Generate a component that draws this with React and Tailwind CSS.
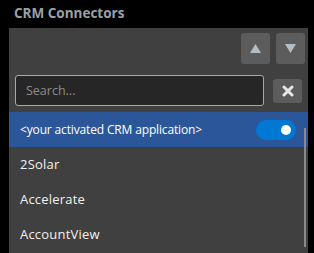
import React, { useState } from 'react';

const connectors = ['2Solar', 'Accelerate', 'AccountView'];

const App = () => {
  const [query, setQuery] = useState('');
  const [enabled, setEnabled] = useState(true);

  return (
    <div className="w-[314px] h-[253px] bg-black overflow-hidden font-['Open_Sans',sans-serif]">
      {/* Title */}
      <div className="h-[28px] pl-[14px] pt-[3px] text-[13.5px] font-bold leading-[20px] text-[#9aa0a8]">
        CRM Connectors
      </div>

      {/* Panel */}
      <div className="ml-[9px] w-[299px] h-[225px] bg-[#404040]">
        {/* Move buttons */}
        <div className="flex justify-end gap-[6px] pt-[5px] pr-[3px]">
          <button className="w-[29px] h-[31px] rounded-[3px] bg-[#5c5c5c] flex items-center justify-center">
            <svg width="11" height="9" viewBox="0 0 11 9">
              <polygon points="5.5,0 11,9 0,9" fill="#b4bcc4" />
            </svg>
          </button>
          <button className="w-[29px] h-[31px] rounded-[3px] bg-[#5c5c5c] flex items-center justify-center">
            <svg width="11" height="9" viewBox="0 0 11 9">
              <polygon points="0,0 11,0 5.5,9" fill="#b4bcc4" />
            </svg>
          </button>
        </div>

        {/* Search */}
        <div className="flex items-center gap-[9px] pl-[6px] mt-[11px]">
          <input
            type="text"
            placeholder="Search..."
            value={query}
            onChange={(e) => setQuery(e.target.value)}
            className="w-[249px] h-[31px] rounded-[3px] border border-[#a8a8a8] bg-[#262626] px-[10px] text-[12.5px] text-white placeholder:text-[#8c8c8c] focus:outline-none"
          />
          <button
            onClick={() => setQuery('')}
            className="w-[29px] h-[24px] rounded-[3px] bg-[#5c5c5c] flex items-center justify-center"
          >
            <svg width="12" height="12" viewBox="0 0 12 12">
              <path d="M2 2L10 10M10 2L2 10" stroke="#e8e8e8" strokeWidth="3" strokeLinecap="round" />
            </svg>
          </button>
        </div>

        {/* List */}
        <div className="relative mt-[6px]">
          <div className="h-[35px] bg-[#2b579a] flex items-center justify-between pl-[11px] pr-[12px]">
            <span className="text-[12px] tracking-[-0.15px] text-white">&lt;your activated CRM application&gt;</span>
            <button
              onClick={() => setEnabled(!enabled)}
              className="w-[40px] h-[20px] rounded-full bg-[#0078d4] flex items-center justify-end pr-[5px]"
            >
              <span className="w-[10px] h-[10px] rounded-full bg-white" />
            </button>
          </div>
          {connectors.map((name) => (
            <div key={name} className="h-[35px] flex items-center pl-[11px] text-[13px] tracking-[0.2px] text-[#f0f0f0]">
              {name}
            </div>
          ))}
          {/* Scrollbar */}
          <div className="absolute right-[2px] top-[16px] w-[2px] h-[119px] bg-[#8a8a8a]" />
        </div>
      </div>
    </div>
  );
};

export default App;
